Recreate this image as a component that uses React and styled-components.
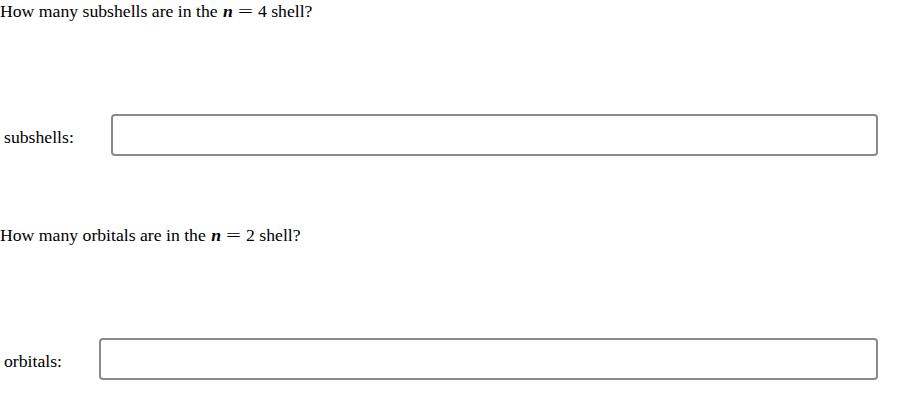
import styled, { createGlobalStyle } from 'styled-components';

const Global = createGlobalStyle`
  body {
    margin: 0;
    background: #fff;
    font-family: "Liberation Serif", "Times New Roman", serif;
    font-size: 17.7px;
    color: #000;
  }
`;

const Page = styled.div`
  width: 901px;
  height: 414px;
  overflow: hidden;
  padding-right: 23px;
  box-sizing: border-box;
`;

const Question = styled.section`
  height: 224px;
  display: flex;
  flex-direction: column;
`;

const Prompt = styled.p`
  margin: 0;
  line-height: 22px;
`;

// math-style variable and equals sign
const Var = styled.i`
  font-weight: bold;
  margin: 0 4px 0 1px;
`;

const Eq = styled.span`
  display: inline-block;
  width: 17px;
  text-align: center;
  transform: scaleX(1.5);
  margin-right: 4px;
`;

const AnswerRow = styled.div`
  display: flex;
  align-items: center;
  margin-top: 92px;
`;

const Label = styled.label`
  padding: 5px 0 0 4px;
  width: ${p => p.w}px;
  flex: none;
`;

const Field = styled.input`
  flex: 1;
  height: 42px;
  box-sizing: border-box;
  border: 2px solid #8a8a8a;
  border-radius: 4px;
  outline: none;
  font: inherit;
  padding: 0 8px;
`;

const items = [
  { n: 4, what: 'subshells', w: 107 },
  { n: 2, what: 'orbitals', w: 95 },
];

export default function App() {
  return (
    <Page>
      <Global />
      {items.map(it => (
        <Question key={it.what}>
          <Prompt>
            How many {it.what} are in the <Var>n</Var><Eq>=</Eq>{it.n} shell?
          </Prompt>
          <AnswerRow>
            <Label w={it.w}>{it.what}:</Label>
            <Field type="text" />
          </AnswerRow>
        </Question>
      ))}
    </Page>
  );
}
